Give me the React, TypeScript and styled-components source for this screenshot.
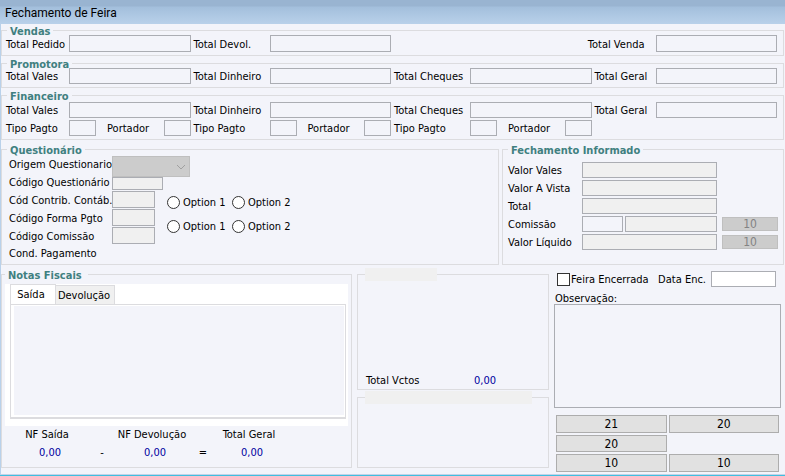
import React, { useState } from "react";
import styled, { createGlobalStyle } from "styled-components";

const color = {
  surface: "#f3f4fa",
  line: "#dcdcdf",
  inputLine: "#abadb3",
  disabled: "#f0f0f0",
  heading: "#408080",
  value: "#0000a0",
};

const GlobalStyle = createGlobalStyle`
  *, *::before, *::after { box-sizing: border-box; }
  body {
    margin: 0;
    background: ${color.surface};
    color: #000;
    font: 11px/14px "DejaVu Sans Condensed", "DejaVu Sans", Tahoma, sans-serif;
  }
  button, input, select, textarea { font: inherit; color: inherit; }
`;

const Window = styled.main`
  display: flex;
  flex-direction: column;
  min-height: 100vh;
  background: ${color.surface};
  border-bottom: 1px solid #3fbfe0;
`;

const TitleBar = styled.header`
  height: 24px;
  padding: 2px 5px 0;
  background: linear-gradient(#99b4d1 0, #99b4d1 6px, #a3bfdc 7px, #b9d1ea 100%);
`;

const Title = styled.h1`
  margin: 0;
  font: 12px/22px Roboto, "Segoe UI", sans-serif;
`;

const Content = styled.div`
  flex: 1;
  display: flex;
  flex-direction: column;
  gap: 3px;
  padding: 2px 1px 0 0;
  border-left: 1px solid #b9d1ea;
  border-bottom: 1px solid #c3d3e8;
`;

const Group = styled.fieldset`
  display: flex;
  flex-direction: column;
  min-width: 0;
  margin: 0;
  padding: 0;
  border: 1px solid ${color.line};
`;

const Legend = styled.legend<{ $tall?: boolean }>`
  height: ${(p) => (p.$tall ? 13 : 9)}px;
  line-height: ${(p) => (p.$tall ? 15 : 11)}px;
  margin-left: ${(p) => (p.$tall ? 3 : 5)}px;
  padding: 0 ${(p) => (p.$tall ? 6 : 3)}px 0 3px;
  color: ${color.heading};
  font-weight: bold;
  white-space: nowrap;
`;

const BlankLegend = styled.legend<{ $share: number }>`
  width: ${(p) => p.$share}%;
  height: 13px;
  margin-left: 7px;
  padding: 0;
  background: ${color.disabled};
`;

const TotalsGrid = styled.div<{ $rowHeight?: number; $top?: number }>`
  display: grid;
  grid-template-columns: 63px 1fr 79px 1fr 79px 1fr 64px 1fr;
  grid-auto-rows: ${(p) => p.$rowHeight ?? 16}px;
  row-gap: 2px;
  align-items: center;
  padding: ${(p) => p.$top ?? 0}px 6px 3px 4px;
`;

const Label = styled.label<{ $indent?: number }>`
  padding-top: 2px;
  padding-left: ${(p) => p.$indent ?? 0}px;
  white-space: nowrap;
`;

const EndLabel = styled(Label)`
  grid-column: 6 / 8;
  padding-right: 11px;
  text-align: right;
`;

const Field = styled.input<{ $tone?: "gray" | "white" }>`
  width: 100%;
  height: 100%;
  min-width: 0;
  margin: 0;
  padding: 0 3px;
  border: 1px solid ${color.inputLine};
  border-radius: 0;
  background: ${(p) =>
    p.$tone === "gray" ? color.disabled : p.$tone === "white" ? "#fff" : color.surface};
`;

const PairCell = styled.div`
  display: flex;
  align-items: center;
  height: 100%;
  ${Field} { flex: 0 0 27px; }
  ${Label} { flex: 1; }
`;

const MiddleRow = styled.div`
  display: grid;
  grid-template-columns: 498fr 282fr;
  column-gap: 3px;
  margin-top: 2px;
`;

const SurveyBody = styled.div`
  display: grid;
  grid-template-columns: 103px 55px 1fr;
  padding: 1px 6px 1px 7px;
`;

const LabelStack = styled.div`
  display: grid;
  grid-auto-rows: 18px;
  align-items: center;
`;

const ControlStack = styled.div`
  display: flex;
  flex-direction: column;
  gap: 1px;
  padding-top: 1px;
`;

const SelectBox = styled.div`
  display: grid;
  flex: none;
  width: 78px;
  height: 21px;
  margin-bottom: -1px;
  svg {
    grid-area: 1 / 1;
    place-self: center end;
    margin-right: 4px;
    pointer-events: none;
  }
`;

const Select = styled.select`
  grid-area: 1 / 1;
  appearance: none;
  padding: 0 4px;
  border: 1px solid #bfbfbf;
  border-radius: 0;
  background: #ccc;
  opacity: 1;
`;

const CodeField = styled(Field)<{ $wide?: boolean }>`
  flex: none;
  width: ${(p) => (p.$wide ? 51 : 43)}px;
  height: ${(p) => (p.$wide ? 13 : 17)}px;
`;

const Options = styled.div`
  display: flex;
  flex-direction: column;
  gap: 8px;
  padding-top: 39px;
`;

const OptionRow = styled.div`
  display: flex;
`;

const OptionLabel = styled.label`
  display: flex;
  align-items: center;
  gap: 3px;
  width: 65px;
  white-space: nowrap;
`;

const OptionText = styled.span`
  padding-top: 2px;
`;

const Radio = styled.input`
  appearance: none;
  flex: none;
  width: 13px;
  height: 13px;
  margin: 0;
  border: 1px solid #333;
  border-radius: 50%;
  background: #fff;
  &:checked { background: radial-gradient(#333 0 3px, #fff 4px); }
`;

const InformedBody = styled.div`
  display: grid;
  grid-template-columns: 74px 1fr 56px;
  grid-auto-rows: 16px;
  gap: 2px 0;
  align-items: center;
  padding: 8px 5px 0;
`;

const InformedCell = styled.div`
  display: flex;
  gap: 2px;
  height: 100%;
  margin-right: 5px;
`;

const RateField = styled(Field)`
  flex: 0 0 41px;
`;

const SmallButton = styled.button`
  grid-column: 3;
  height: 14px;
  padding: 0;
  border: 1px solid #bfbfbf;
  background: #ccc;
  color: #838383;
  font-size: 12px;
  line-height: 12px;
`;

const BottomRow = styled.div`
  flex: 1;
  display: grid;
  grid-template-columns: 351fr 192fr 230fr;
  column-gap: 5px;
`;

const NotesGroup = styled(Group)`
  margin-bottom: 6px;
`;

const TabArea = styled.div`
  flex: 1;
  display: flex;
  flex-direction: column;
  margin: 3px 3px 0;
  padding: 0 2px 7px 5px;
  background: #fff;
`;

const TabList = styled.div`
  display: flex;
  align-items: flex-end;
  height: 20px;
`;

const Tab = styled.button<{ $active: boolean }>`
  width: ${(p) => (p.$active ? 46 : 59)}px;
  height: ${(p) => (p.$active ? 21 : 19)}px;
  margin-bottom: ${(p) => (p.$active ? -1 : 0)}px;
  padding: ${(p) => (p.$active ? "0 4px 0 0" : "2px 2px 0 0")};
  border: 1px solid ${color.line};
  border-bottom-width: 0;
  background: ${(p) => (p.$active ? "#fff" : color.disabled)};
  white-space: nowrap;
  & + & { border-left-width: 0; }
`;

const TabPane = styled.div`
  flex: 1;
  display: flex;
  padding: 1px 1px 2px 3px;
  border: 1px solid ${color.line};
  border-bottom-width: 2px;
`;

const PaneSurface = styled.div`
  flex: 1;
  background: ${color.surface};
`;

const Summary = styled.div`
  display: grid;
  grid-template-columns: 90px 20px 80px 22px 70px;
  grid-template-rows: 14px 14px;
  row-gap: 4px;
  justify-items: center;
  padding: 2px 0 7px;
`;

const Amount = styled.output`
  color: ${color.value};
`;

const SummaryAmount = styled(Amount)`
  padding-left: 6px;
`;

const SideStack = styled.div`
  display: grid;
  grid-template-rows: 122fr 77fr;
  row-gap: 1px;
  margin-bottom: 6px;
`;

const DueTotal = styled.div`
  display: grid;
  grid-template-columns: 108px 1fr;
  margin-top: auto;
  padding: 0 8px 1px;
`;

const ClosingPanel = styled.section`
  display: flex;
  flex-direction: column;
  padding: 3px 3px 2px 0;
`;

const ClosingRow = styled.div`
  display: grid;
  grid-template-columns: 1fr auto 65px;
  column-gap: 5px;
  height: 16px;
  align-items: center;
  padding: 0 5px 0 3px;
`;

const CheckLabel = styled.label`
  display: flex;
  align-items: center;
  gap: 1px;
  white-space: nowrap;
`;

const Checkbox = styled.input`
  appearance: none;
  flex: none;
  width: 13px;
  height: 13px;
  margin: 0;
  border: 1px solid #333;
  background: #fff;
  &:checked { box-shadow: inset 0 0 0 2px #fff; background: #333; }
`;

const NoteLabel = styled(Label)`
  margin-top: 3px;
  padding-left: 1px;
`;

const NoteArea = styled.textarea`
  flex: 1;
  min-height: 104px;
  margin: -2px 0 7px;
  padding: 2px;
  border: 1px solid ${color.inputLine};
  border-radius: 0;
  background: transparent;
  resize: none;
`;

const ButtonGrid = styled.div`
  display: grid;
  grid-template-columns: 1fr 1fr;
  grid-template-rows: 18px 17px 18px;
  gap: 2px;
  padding: 0 2px;
`;

const ActionButton = styled.button<{ $firstColumn?: boolean }>`
  ${(p) => (p.$firstColumn ? "grid-column: 1;" : "")}
  padding: 0;
  border: 1px solid #adadad;
  background: #e1e1e1;
  font-size: 12px;
  line-height: 14px;
`;

const totals = ["Total Vales", "Total Dinheiro", "Total Cheques", "Total Geral"];

function TotalsCells({ prefix }: { prefix: string }) {
  return (
    <>
      {totals.map((name, i) => (
        <React.Fragment key={name}>
          <Label htmlFor={`${prefix}-${i}`} $indent={i === 0 ? 0 : 3}>
            {name}
          </Label>
          <Field id={`${prefix}-${i}`} />
        </React.Fragment>
      ))}
    </>
  );
}

const surveyLabels = [
  "Origem Questionario",
  "Código Questionário",
  "Cód Contrib. Contáb.",
  "Código Forma Pgto",
  "Código Comissão",
];

export default function App() {
  const [tab, setTab] = useState("Saída");

  return (
    <>
      <GlobalStyle />
      <Window>
        <TitleBar>
          <Title>Fechamento de Feira</Title>
        </TitleBar>
        <Content>
          <Group>
            <Legend>Vendas</Legend>
            <TotalsGrid $rowHeight={17}>
              <Label htmlFor="pedido">Total Pedido</Label>
              <Field id="pedido" />
              <Label htmlFor="devol" $indent={3}>Total Devol.</Label>
              <Field id="devol" />
              <EndLabel htmlFor="venda">Total Venda</EndLabel>
              <Field id="venda" />
            </TotalsGrid>
          </Group>

          <Group>
            <Legend>Promotora</Legend>
            <TotalsGrid>
              <TotalsCells prefix="promotora" />
            </TotalsGrid>
          </Group>

          <Group>
            <Legend>Financeiro</Legend>
            <TotalsGrid $top={2}>
              <TotalsCells prefix="financeiro" />
              {[0, 1, 2].map((i) => (
                <React.Fragment key={i}>
                  <Label htmlFor={`tipo-${i}`} $indent={i === 0 ? 0 : 3}>Tipo Pagto</Label>
                  <PairCell>
                    <Field id={`tipo-${i}`} />
                    <Label htmlFor={`portador-${i}`} $indent={11}>Portador</Label>
                    <Field id={`portador-${i}`} />
                  </PairCell>
                </React.Fragment>
              ))}
            </TotalsGrid>
          </Group>

          <MiddleRow>
            <Group>
              <Legend>Questionário</Legend>
              <SurveyBody>
                <LabelStack>
                  {surveyLabels.map((name, i) => (
                    <Label key={name} htmlFor={`survey-${i}`}>{name}</Label>
                  ))}
                  <span>Cond. Pagamento</span>
                </LabelStack>
                <ControlStack>
                  <SelectBox>
                    <Select id="survey-0" disabled />
                    <svg width="10" height="6" viewBox="0 0 10 6" fill="none" stroke="#a0a0a0">
                      <path d="M1 1l4 4 4-4" />
                    </svg>
                  </SelectBox>
                  <CodeField id="survey-1" $tone="gray" $wide />
                  <CodeField id="survey-2" $tone="gray" />
                  <CodeField id="survey-3" $tone="gray" />
                  <CodeField id="survey-4" $tone="gray" />
                </ControlStack>
                <Options>
                  {["contrib", "forma"].map((name) => (
                    <OptionRow key={name} role="radiogroup" aria-label={name}>
                      {["Option 1", "Option 2"].map((text) => (
                        <OptionLabel key={text}>
                          <Radio type="radio" name={name} value={text} />
                          <OptionText>{text}</OptionText>
                        </OptionLabel>
                      ))}
                    </OptionRow>
                  ))}
                </Options>
              </SurveyBody>
            </Group>

            <Group>
              <Legend>Fechamento Informado</Legend>
              <InformedBody>
                {["Valor Vales", "Valor A Vista", "Total", "Comissão", "Valor Líquido"].map((name, i) => (
                  <React.Fragment key={name}>
                    <Label htmlFor={`informado-${i}`}>{name}</Label>
                    <InformedCell>
                      {i === 3 && <RateField aria-label="Percentual de comissão" />}
                      <Field id={`informado-${i}`} $tone="gray" />
                    </InformedCell>
                    {i < 3 ? <span /> : <SmallButton type="button" disabled>10</SmallButton>}
                  </React.Fragment>
                ))}
              </InformedBody>
            </Group>
          </MiddleRow>

          <BottomRow>
            <NotesGroup>
              <Legend $tall>Notas Fiscais</Legend>
              <TabArea>
                <TabList role="tablist">
                  {["Saída", "Devolução"].map((name) => (
                    <Tab
                      key={name}
                      type="button"
                      role="tab"
                      aria-selected={tab === name}
                      $active={tab === name}
                      onClick={() => setTab(name)}
                    >
                      {name}
                    </Tab>
                  ))}
                </TabList>
                <TabPane role="tabpanel">
                  <PaneSurface />
                </TabPane>
              </TabArea>
              <Summary>
                <span>NF Saída</span>
                <span />
                <span>NF Devolução</span>
                <span />
                <span>Total Geral</span>
                <SummaryAmount>0,00</SummaryAmount>
                <span>-</span>
                <SummaryAmount>0,00</SummaryAmount>
                <span>=</span>
                <SummaryAmount>0,00</SummaryAmount>
              </Summary>
            </NotesGroup>

            <SideStack>
              <Group>
                <BlankLegend $share={38} />
                <DueTotal>
                  <span>Total Vctos</span>
                  <Amount>0,00</Amount>
                </DueTotal>
              </Group>
              <Group>
                <BlankLegend $share={88} />
              </Group>
            </SideStack>

            <ClosingPanel>
              <ClosingRow>
                <CheckLabel>
                  <Checkbox type="checkbox" />
                  <OptionText>Feira Encerrada</OptionText>
                </CheckLabel>
                <Label htmlFor="data-enc">Data Enc.</Label>
                <Field id="data-enc" $tone="white" />
              </ClosingRow>
              <NoteLabel htmlFor="observacao">Observação:</NoteLabel>
              <NoteArea id="observacao" />
              <ButtonGrid>
                <ActionButton type="button">21</ActionButton>
                <ActionButton type="button">20</ActionButton>
                <ActionButton type="button" $firstColumn>20</ActionButton>
                <ActionButton type="button" $firstColumn>10</ActionButton>
                <ActionButton type="button">10</ActionButton>
              </ButtonGrid>
            </ClosingPanel>
          </BottomRow>
        </Content>
      </Window>
    </>
  );
}
